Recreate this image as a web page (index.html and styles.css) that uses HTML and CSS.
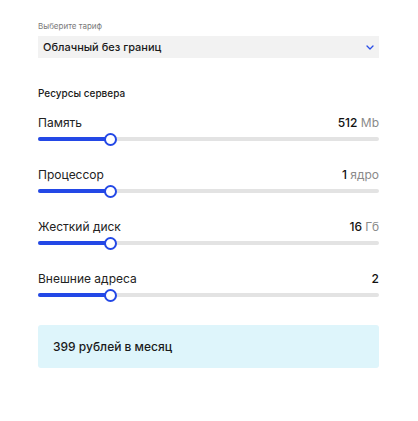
FILE: index.html
```html
<!DOCTYPE html>
<html lang="ru">
<head>
<meta charset="utf-8">
<link rel="stylesheet" href="styles.css">
</head>
<body>
<div class="page">
  <div class="field-label">Выберите тариф</div>
  <div class="select">
    <span class="select-text">Облачный без границ</span>
    <svg class="chevron" width="8" height="5" viewBox="0 0 8 5"><path d="M1 1 L4 4 L7 1" fill="none" stroke="#2a4ee8" stroke-width="1.3" stroke-linecap="round" stroke-linejoin="round"/></svg>
  </div>
  <div class="section-title">Ресурсы сервера</div>
  <div class="rows">
    <div class="row">
      <div class="row-head"><span>Память</span><span class="val"><b>512</b> Mb</span></div>
      <div class="slider"><div class="track"><div class="fill" style="width:21.1%"><span class="thumb"></span></div></div></div>
    </div>
    <div class="row">
      <div class="row-head"><span>Процессор</span><span class="val"><b>1</b> ядро</span></div>
      <div class="slider"><div class="track"><div class="fill" style="width:21.1%"><span class="thumb"></span></div></div></div>
    </div>
    <div class="row">
      <div class="row-head"><span>Жесткий диск</span><span class="val"><b>16</b> Гб</span></div>
      <div class="slider"><div class="track"><div class="fill" style="width:21.1%"><span class="thumb"></span></div></div></div>
    </div>
    <div class="row">
      <div class="row-head"><span>Внешние адреса</span><span class="val"><b>2</b></span></div>
      <div class="slider"><div class="track"><div class="fill" style="width:21.1%"><span class="thumb"></span></div></div></div>
    </div>
  </div>
  <div class="price">399 рублей в месяц</div>
</div>
</body>
</html>
```
FILE: styles.css
```css
html, body {
  margin: 0;
  background: #ffffff;
}
body {
  font-family: Inter, "Noto Sans", sans-serif;
  color: #1a1a1a;
}
.page {
  padding: 21px 39px 0 38px;
  display: flex;
  flex-direction: column;
}
.field-label {
  font-size: 8px;
  line-height: 10px;
  color: #7a7a7a;
}
.select {
  margin-top: 5px;
  height: 22px;
  background: #f2f2f2;
  display: flex;
  align-items: center;
  justify-content: space-between;
  padding: 0 5px 0 5px;
}
.select-text {
  font-size: 11px;
  font-weight: 500;
  color: #1a1a1a;
}
.chevron {
  display: block;
}
.section-title {
  margin-top: 29px;
  font-size: 10px;
  line-height: 12px;
  font-weight: 500;
  color: #1a1a1a;
}
.rows {
  margin-top: 16px;
  display: flex;
  flex-direction: column;
  gap: 22px;
}
.row-head {
  display: flex;
  justify-content: space-between;
  font-size: 12px;
  line-height: 16px;
  color: #222;
}
.val {
  color: #8a8a8a;
}
.val b {
  font-weight: 500;
  color: #111;
}
.slider {
  margin-top: 2px;
  height: 12px;
  display: flex;
  align-items: center;
}
.track {
  flex: 1;
  height: 4px;
  border-radius: 2px;
  background: #e3e3e3;
}
.fill {
  position: relative;
  height: 100%;
  border-radius: 2px;
  background: #2348e6;
}
.thumb {
  position: absolute;
  right: -7px;
  top: -4.5px;
  width: 9px;
  height: 9px;
  border: 2px solid #2348e6;
  border-radius: 50%;
  background: #fff;
}
.price {
  margin-top: 24px;
  height: 43px;
  background: #def5fb;
  border-radius: 3px;
  display: flex;
  align-items: center;
  padding-left: 15px;
  font-size: 12px;
  font-weight: 500;
  color: #1a1a1a;
}
```
